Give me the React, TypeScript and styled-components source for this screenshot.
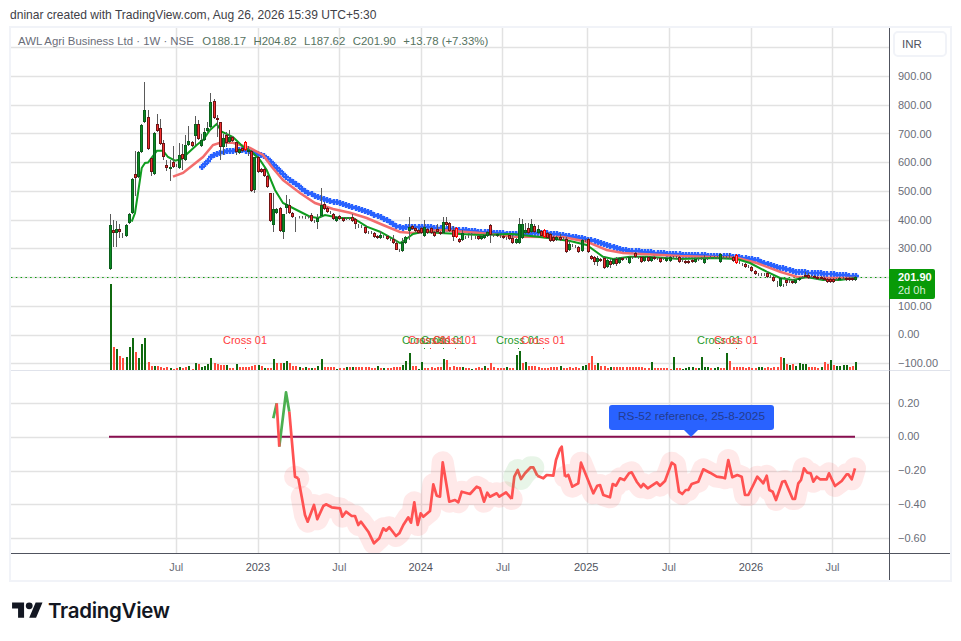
import React from 'react';
import styled, { createGlobalStyle } from 'styled-components';

const FONT = '"Liberation Sans", "Noto Sans", sans-serif';

type Point = [number, number];
type Candle = [string, number, number, number?, number?];

const BAR_START = 110.3;
const BAR_STEP = 3.145;
const barX = (i: number) => BAR_START + i * BAR_STEP;

// readings were taken off 3x crops, this brings them back to page pixels
const fromCrop = (ox: number, oy: number, pts: Point[]): Point[] =>
  pts.map(([x, y]) => [ox + x / 3, oy + y / 3] as Point);

const candles: Candle[] = [
  ['g', 225, 269, 214], ['r', 230, 233, 220, 247], ['g', 229, 233, 221, 247], ['r', 229, 232, 224, 238], ['r', 235, 236, 233, 238],
  ['g', 225, 236], ['g', 214, 223], ['g', 179, 213], ['r', 174, 178, 151, 196], ['g', 152, 177],
  ['g', 125, 152], ['g', 110, 122, 82], ['r', 117, 149, 110], ['r', 158, 172, 158, 176], ['g', 133, 174],
  ['r', 124, 131, 114], ['r', 128, 144, 119], ['r', 143, 157, 140, 160], ['r', 165, 168, 160, 171], ['g', 167, 169, 160, 181],
  ['r', 162, 167, 146], ['r', 165, 166], ['g', 155, 168, 143], ['r', 154, 159, 144, 170], ['g', 145, 160, 135],
  ['g', 141, 145, 126], ['r', 142, 146], ['g', 124, 136, 116, 145], ['r', 124, 139, 120], ['g', 140, 146, 134],
  ['g', 132, 140, 128], ['g', 128, 131, 122], ['g', 102, 127, 93], ['r', 101, 118, 99], ['r', 118, 120, 115, 137],
  ['r', 122, 147, 122, 160], ['g', 138, 147, 134, 155], ['r', 135, 143, 132, 147], ['g', 137, 142, 130], ['r', 137, 141],
  ['r', 142, 152, 142, 155], ['g', 149, 153], ['r', 148, 151], ['x', 142, 150], ['g', 150, 152, 146, 156],
  ['r', 151, 191], ['g', 157, 190, 157, 193], ['r', 157, 172], ['r', 169, 172], ['r', 169, 176],
  ['r', 176, 187], ['r', 193, 221, 193], ['g', 209, 225, 193, 232], ['g', 209, 213], ['r', 208, 231],
  ['g', 214, 232, 214, 239], ['g', 204, 208, 195, 214], ['r', 205, 213, 199], ['r', 213, 217], ['r', 217, 217.5, 217, 232],
  ['r', 217, 217.5], ['r', 217, 217.5], ['r', 217, 218], ['r', 217, 217.5], ['r', 215, 221, 213, 222],
  ['r', 221, 222], ['g', 218, 222, 214, 229], ['g', 205, 216, 188], ['r', 204, 209, 202], ['r', 208, 212],
  ['r', 212, 213], ['r', 214, 219], ['g', 217, 221], ['r', 216, 219], ['r', 218, 221],
  ['r', 218, 219], ['r', 218, 219], ['r', 217, 221, 214], ['r', 219, 224, 218, 229], ['r', 224, 225, 224, 228],
  ['r', 226, 227], ['r', 227, 233], ['r', 232, 233], ['r', 232, 233], ['r', 233, 237],
  ['r', 236, 238], ['g', 235, 238, 231], ['r', 236, 237], ['r', 236, 239], ['r', 239, 240],
  ['r', 239, 243, 235], ['r', 243, 250, 240, 250], ['r', 250, 251], ['g', 242, 251, 238, 252], ['g', 237, 243],
  ['g', 227, 231, 217, 240], ['r', 226, 229], ['r', 228, 231], ['r', 230, 233], ['r', 228, 233],
  ['g', 227, 236, 220], ['r', 229, 233], ['r', 228, 233], ['r', 232, 236], ['r', 229, 232, 224],
  ['r', 232, 234], ['g', 222, 233, 217], ['r', 222, 225, 217], ['r', 223, 231], ['r', 230, 237, 226, 241],
  ['x', 228, 237], ['r', 239, 242], ['g', 233, 240, 230], ['r', 237, 238], ['r', 236, 237],
  ['r', 236, 237, 233, 240], ['r', 237, 238], ['r', 236, 239], ['g', 236, 239], ['g', 235, 238],
  ['g', 232, 236], ['r', 225, 235, 224, 243], ['r', 235, 236], ['g', 234, 236], ['r', 236, 237],
  ['r', 236, 238], ['r', 238, 239], ['r', 235, 239], ['r', 238, 243, 235, 244], ['g', 239, 243],
  ['g', 224, 243, 218], ['g', 224, 238, 219], ['g', 230, 233, 223], ['r', 228, 233, 223], ['g', 224, 232, 219],
  ['r', 226, 232, 224], ['g', 229, 233, 225], ['r', 231, 236], ['x', 230, 237], ['r', 233, 238],
  ['r', 234, 241], ['r', 237, 241], ['g', 237, 240], ['r', 237, 240, 234], ['r', 238, 239],
  ['r', 239, 252, 237, 253], ['g', 244, 250, 241], ['r', 245, 246], ['r', 246, 247], ['r', 247, 252],
  ['g', 240, 251], ['r', 240, 241], ['r', 239, 252], ['r', 256, 259], ['r', 257, 262, 256, 265],
  ['g', 258, 262, 256, 266], ['r', 259, 261], ['r', 258, 268], ['g', 260, 267], ['r', 261, 265, 259, 268],
  ['g', 259, 264], ['r', 259, 264, 257, 266], ['g', 258, 263], ['r', 258, 260], ['g', 258, 259],
  ['g', 257, 263], ['r', 257, 258], ['r', 253, 257, 252, 258], ['r', 257, 258], ['r', 257, 262],
  ['g', 257, 261], ['r', 257, 261], ['g', 257, 261], ['r', 257, 259], ['r', 258, 259],
  ['r', 258, 262], ['r', 258, 259], ['g', 258, 261], ['g', 257, 261], ['r', 257, 258],
  ['r', 257, 258], ['r', 257, 262], ['r', 260, 261], ['r', 261, 263], ['r', 261, 263],
  ['r', 260, 262], ['g', 259, 262], ['r', 259, 260], ['r', 258, 259], ['g', 259, 263, 255],
  ['r', 258, 259], ['r', 257, 258], ['r', 257, 258], ['r', 257, 258], ['g', 254, 262],
  ['r', 257, 258], ['r', 257, 258], ['r', 257, 258, 253], ['r', 257, 261], ['x', 255, 263, 254],
  ['r', 262, 263], ['r', 264, 265], ['r', 264, 267], ['r', 266, 267], ['r', 267, 271],
  ['r', 271, 274], ['r', 274, 275], ['r', 274, 275], ['r', 274, 275], ['r', 273, 277, 271],
  ['r', 276, 277], ['r', 277, 281], ['r', 284, 285, 281, 287], ['g', 278, 286], ['r', 285, 286],
  ['r', 280, 283, 278, 286], ['r', 281, 282], ['r', 281, 283, 279, 284], ['g', 280, 283], ['g', 278, 280],
  ['g', 277, 278], ['r', 275, 277, 272], ['r', 275, 278, 273], ['r', 276, 277], ['r', 276, 278],
  ['r', 277, 279], ['r', 277, 279], ['r', 278, 280], ['r', 279, 282], ['r', 279, 282],
  ['r', 279, 282], ['r', 279, 280], ['g', 278, 280], ['r', 278, 279], ['r', 278, 280],
  ['r', 278, 280], ['r', 278, 280], ['g', 277, 280],
];

// positive is an up week, negative a down week, twenty bars to a row
const volumes = [
  86, -23, 21, -14, -12, 13, 23, 32, -18, 12, 26, 32, -8, -4, 4, -4, -3, -2, -3, 2,
  -1, -2, 3, -2, -3, 4, -1, 7, -6, 3, 4, 6, 12, -7, -6, -5, -5, 5, -2, -2,
  6, -3, -3, -3, -3, -4, -5, 5, -4, 2, -2, -2, 11, -7, -7, 7, 9, -7, -4, -4,
  3, -2, 3, -2, 2, -2, 4, 11, -3, -3, -3, -3, 1, -2, -2, 3, -3, 3, -3, -3,
  -3, -3, -3, -2, -2, 4, -2, 2, -2, -2, -3, -3, -3, 5, 9, 17, -4, -4, 1, 8,
  -2, -2, -3, -2, -3, -3, 11, -10, -3, -4, -3, -3, 3, -2, -2, 1, -2, -3, -2, 4,
  -2, -7, -3, -2, -2, -2, 3, -2, -2, 15, 19, -7, 8, -4, -4, -4, -3, -2, -2, -2,
  -3, -3, -3, 4, -2, -2, -3, -2, -3, -2, 4, 5, -7, -14, -5, 7, -4, -4, -2, 3,
  -3, -3, -3, -3, -3, -3, -3, -3, -3, -3, -2, -2, 8, -2, -2, -2, -2, -2, -1, 13,
  -2, -2, 1, 2, 3, 3, -2, 2, 13, 3, 3, -2, 2, 3, -2, -2, 17, -9, -3, -3,
  -3, -3, -2, -3, -2, -2, 3, 3, -2, -3, -2, -3, -3, -13, 12, -6, 5, -6, 4, 7,
  6, 6, -3, -3, -3, -2, 3, -8, -6, 10, -5, 4, 4, 5, 5, -3, -4, 8,
];

const greenLine: Point[] = [
  [131.7, 221.7], [135, 213], [138, 193], [141.7, 168], [145, 163], [148, 162.5], [157, 150.7], [163, 150.7], [168, 157],
  [175, 160.7], [181.7, 159], [188, 153], [196.7, 145], [203, 140], [210, 130], [216.7, 124], [221.7, 131.7], [233, 137],
  [243, 146.7], [251.7, 151.7], [260, 160], [266.7, 170], [275, 190], [283, 203], [296.7, 210], [310, 216.7], [318, 218],
  [325, 215], [340, 218], [353, 218], [366.7, 226.7], [380, 231.7], [391.7, 238], [400, 243], [405, 240], [413, 234],
  [423, 231.7], [440, 233], [480, 235], [512, 234], [540, 237], [570, 241], [586.7, 245], [603, 256.7], [613, 259],
  [630, 256.7], [646.7, 256.7], [680, 259], [713, 258], [736.7, 259], [750, 263], [766.7, 271.7], [780, 278], [793, 280],
  [806.7, 277], [823, 280], [840, 280], [855, 278],
];

const pinkLine: Point[] = [
  [173, 176.7], [183, 173], [193, 165], [203, 157], [213, 145], [220, 142.7], [233, 142.7], [250, 148], [263, 155],
  [271.7, 166.7], [283, 180], [300, 193], [315, 203], [333, 209], [350, 212.7], [366.7, 218], [383, 225], [400, 232],
  [413, 233], [440, 230], [480, 233], [513, 236.7], [563, 237], [586.7, 241.7], [606.7, 250], [623, 253], [680, 256],
  [736.7, 257.7], [756.7, 263], [780, 271.7], [796.7, 276.7], [826.7, 278], [855, 278],
];

const blueLine: Point[] = [
  [200, 168], [206.7, 161.7], [213, 155], [226.7, 151], [240, 150], [253, 151.7], [265, 156.7], [276.7, 168], [290, 180],
  [306.7, 191.7], [320, 198], [350, 206], [366.7, 211.7], [383, 218], [400, 227.7], [423, 226.7], [480, 231.7], [513, 234],
  [546.7, 233], [570, 236], [590, 240], [613, 247], [623, 250], [670, 254], [736.7, 256.7], [756.7, 260], [780, 267.7],
  [796.7, 271.7], [855, 276],
];

const rsGreenStart: Point[] = fromCrop(260, 380, [[40, 115], [50, 70]]);
const rsRedDip: Point[] = fromCrop(260, 380, [[50, 70], [58, 200]]);
const rsGreenPeak: Point[] = fromCrop(260, 380, [[58, 200], [78, 37], [88, 95]]);
const rsDrop: Point[] = fromCrop(260, 380, [[88, 95], [105, 290], [115, 295]]);
const rsBase: Point[] = fromCrop(260, 380, [
  [115, 295], [125, 350], [135, 405], [143, 425], [162, 375], [172, 418], [190, 378], [198, 373], [215, 382], [240, 385],
  [247, 410], [258, 395], [275, 408], [285, 408], [295, 435], [303, 425], [325, 455], [342, 490], [358, 475], [370, 445],
  [378, 452], [388, 442], [408, 468], [418, 460], [430, 435], [445, 412], [453, 428], [463, 367], [473, 435], [482, 400],
  [490, 410], [510, 393], [520, 313], [530, 347], [540, 350], [548, 247], [568, 365], [585, 360], [595, 367], [605, 335],
  [630, 342], [650, 320], [660, 325], [672, 365], [682, 338], [690, 350], [710, 340], [718, 350], [738, 337], [755, 357],
]);
const rsGreenZone: Point[] = fromCrop(260, 380, [
  [755, 357], [763, 290], [773, 270], [783, 297], [795, 280], [812, 262], [820, 262], [832, 287],
]);
const rsPeak: Point[] = [
  [537.3, 475.7], [543.3, 478.3], [546.7, 475], [553.3, 475.7], [556, 460], [560, 449], [561.7, 446.7], [565, 476.7],
];
const rsTail: Point[] = fromCrop(480, 320, [
  [255, 470], [265, 465], [277, 500], [295, 490], [303, 428], [320, 470], [340, 520], [352, 497], [360, 495], [370, 525],
  [390, 532], [398, 492], [408, 497], [420, 475], [433, 480], [447, 460], [455, 457], [470, 485], [483, 502], [490, 492],
  [503, 505], [530, 487], [540, 497], [555, 483], [575, 428], [585, 435], [597, 515], [607, 522], [617, 510], [625, 510],
  [635, 492], [655, 485], [670, 448], [690, 458], [710, 470], [725, 472], [735, 475], [745, 420], [757, 472], [772, 465],
  [785, 470], [795, 525], [805, 525], [820, 495], [832, 470], [850, 490], [860, 467], [868, 510], [878, 515], [888, 540],
  [907, 485], [915, 483], [938, 537], [945, 537], [955, 490], [963, 480], [972, 445], [982, 458], [992, 460], [1000, 485],
  [1010, 470], [1020, 478], [1040, 478], [1047, 460], [1065, 498], [1085, 483], [1100, 463], [1105, 463], [1115, 478], [1125, 445],
]);

const toPoints = (pts: Point[]) => pts.map(([x, y]) => `${x.toFixed(1)},${y.toFixed(1)}`).join(' ');

const lineYAt = (pts: Point[], x: number) => {
  for (let i = 1; i < pts.length; i++) {
    if (x <= pts[i][0]) {
      const [x0, y0] = pts[i - 1];
      const [x1, y1] = pts[i];
      return y0 + ((y1 - y0) * (x - x0)) / (x1 - x0);
    }
  }
  return pts[pts.length - 1][1];
};

const blueCrosses = candles
  .map((_, i) => barX(i))
  .filter((x) => x >= 199 && x <= 857)
  .map((x) => {
    const cx = Math.round(x);
    const cy = Math.round(lineYAt(blueLine, x));
    return `M${cx - 3} ${cy}h6M${cx} ${cy - 3}v6`;
  })
  .join('');

const gridX = [176.5, 258.5, 339.5, 421.5, 502.5, 587.5, 669.5, 751.5, 832.5];
const mainGridY = [47.5, 76.5, 105.5, 133.5, 162.5, 191.5, 220.5, 248.5, 277.5, 306.5, 335.5, 363.5];
const lowerGridY = [403.5, 437.5, 471.5, 504.5, 538.5];

const crossMarks = [
  { x: 245, color: '#ff3b3b' },
  { x: 424, color: '#1f9a2a' },
  { x: 430, color: '#ff3b3b' },
  { x: 443, color: '#1f9a2a' },
  { x: 455, color: '#ff3b3b' },
  { x: 518, color: '#1f9a2a' },
  { x: 543, color: '#ff3b3b' },
  { x: 719, color: '#1f9a2a' },
  { x: 736, color: '#ff3b3b' },
];

const mainTicks = ['900.00', '800.00', '700.00', '600.00', '500.00', '400.00', '300.00', '', '100.00', '0.00', '\u2212100.00'];
const lowerTicks = ['0.20', '0.00', '\u22120.20', '\u22120.40', '\u22120.60'];
const timeTicks = [
  { label: 'Jul', width: 81.5 },
  { label: '2023', width: 81.75, year: true },
  { label: 'Jul', width: 81.25 },
  { label: '2024', width: 81.5, year: true },
  { label: 'Jul', width: 83 },
  { label: '2025', width: 83.5, year: true },
  { label: 'Jul', width: 82 },
  { label: '2026', width: 82, year: true },
  { label: 'Jul', width: 81 },
];

const GlobalStyle = createGlobalStyle`
  html, body {
    margin: 0;
    background: #ffffff;
  }
`;

const Page = styled.div`
  width: 961px;
  height: 641px;
  padding: 0 9px;
  box-sizing: border-box;
  font-family: ${FONT};
  overflow: hidden;
`;

const Caption = styled.div`
  height: 26px;
  padding: 6px 0 0 1px;
  box-sizing: border-box;
  font-size: 12.05px;
  line-height: 18px;
  color: #3f4147;
`;

const ChartFrame = styled.div`
  width: 943px;
  height: 556px;
  box-sizing: border-box;
  border: 2px solid #f1f3f8;
  display: grid;
  grid-template-columns: 879px 60px;
  grid-template-rows: 343px 183px 26px;
`;

const Plot = styled.div<{ $strong?: boolean }>`
  position: relative;
  box-sizing: border-box;
  border-right: 1px solid #50535e;
  border-bottom: 1px solid ${({ $strong }) => ($strong ? '#50535e' : '#e0e3eb')};

  svg {
    display: block;
  }
`;

const Legend = styled.div`
  position: absolute;
  top: 4px;
  left: 7px;
  display: flex;
  gap: 7.5px;
  font-size: 11.4px;
  line-height: 18px;
  color: #6a6d78;
  white-space: nowrap;
`;

const LegendTitle = styled.span`
  margin-right: 1px;
`;

const LegendValue = styled.span`
  color: #56735f;
`;

const PriceAxis = styled.div<{ $top: number; $strong?: boolean }>`
  position: relative;
  box-sizing: border-box;
  padding-top: ${({ $top }) => $top}px;
  border-bottom: 1px solid ${({ $strong }) => ($strong ? '#50535e' : '#e0e3eb')};
`;

const PriceTick = styled.div<{ $height: number }>`
  height: ${({ $height }) => $height}px;
  line-height: ${({ $height }) => $height}px;
  padding-left: 8px;
  font-size: 11px;
  color: #6a6d78;
  white-space: nowrap;
`;

const CurrencyButton = styled.div`
  position: absolute;
  top: 3px;
  left: 3px;
  width: 54px;
  height: 26px;
  box-sizing: border-box;
  border: 2px solid #f1f3f8;
  border-radius: 5px;
  padding-left: 7px;
  font-size: 11.5px;
  line-height: 22px;
  color: #50535e;
`;

const LastPriceTag = styled.div`
  position: absolute;
  top: 241px;
  left: -1px;
  width: 46px;
  height: 30px;
  box-sizing: border-box;
  padding: 2px 0 0 9px;
  background: #089a08;
  border-radius: 0 2px 2px 0;
  color: #ffffff;
  font-size: 11px;
  line-height: 13px;
`;

const TagPrice = styled.div`
  font-weight: 700;
`;

const TagCountdown = styled.div`
  color: #d5f0d5;
`;

const NoteBubble = styled.div`
  position: absolute;
  top: 34px;
  left: 598px;
  width: 165px;
  height: 25px;
  box-sizing: border-box;
  border-radius: 3px;
  background: #2962ff;
  color: #243c8f;
  font-size: 11.8px;
  line-height: 22px;
  text-align: center;
  white-space: nowrap;

  &::after {
    content: '';
    position: absolute;
    left: 75px;
    bottom: -7px;
    border-left: 7px solid transparent;
    border-right: 7px solid transparent;
    border-top: 7px solid #2962ff;
  }
`;

const TimeAxis = styled.div`
  display: flex;
  padding-left: 124.5px;
  border-right: 1px solid #50535e;
  font-size: 11px;
  line-height: 26px;
`;

const TimeTick = styled.div<{ $width: number; $year?: boolean }>`
  flex: 0 0 ${({ $width }) => $width}px;
  text-align: center;
  color: ${({ $year }) => ($year ? '#50535e' : '#6a6d78')};
`;

const AxisCorner = styled.div``;

const Footer = styled.div`
  display: flex;
  align-items: center;
  gap: 5px;
  margin-top: 16px;
  padding-left: 3px;
`;

const Wordmark = styled.div`
  font-family: Inter, "Liberation Sans", sans-serif;
  font-size: 20.5px;
  font-weight: 600;
  line-height: 26px;
  letter-spacing: -0.3px;
  color: #131722;
`;

const CrossLabel = styled.text<{ $color: string }>`
  font-family: ${FONT};
  font-size: 11px;
  fill: ${({ $color }) => $color};
  text-anchor: middle;
`;

const GridLines = ({ ys, y0, y1 }: { ys: number[]; y0: number; y1: number }) => (
  <g stroke="#e2e2e2" strokeWidth={1.5}>
    {ys.map((y) => (
      <line key={y} x1={11} x2={889} y1={y} y2={y} />
    ))}
    {gridX.map((x) => (
      <line key={x} x1={x} x2={x} y1={y0} y2={y1} />
    ))}
  </g>
);

const candleColors: Record<string, { fill: string; stroke: string }> = {
  g: { fill: '#0b8a22', stroke: '#0a5f1c' },
  r: { fill: '#f23030', stroke: '#6f1414' },
  x: { fill: '#ff8a8a', stroke: '#ff0000' },
};

const Candles = () => (
  <g>
    {candles.map(([kind, top, bottom, wickTop, wickBottom], i) => {
      const c = Math.floor(barX(i));
      const y = Math.round(top) + 0.5;
      const h = Math.max(Math.round(bottom - top) - 1, 0);
      return (
        <g key={i}>
          <line
            x1={c + 0.5}
            x2={c + 0.5}
            y1={wickTop ?? top - 1}
            y2={wickBottom ?? bottom + 1}
            stroke={kind === 'x' ? '#ff0000' : '#5a5a5a'}
          />
          <rect
            x={c - 0.5}
            y={y}
            width={2}
            height={h}
            fill={candleColors[kind].fill}
            stroke={candleColors[kind].stroke}
          />
        </g>
      );
    })}
  </g>
);

const VolumeBars = () => (
  <g>
    {volumes.map((v, i) => (
      <rect
        key={i}
        x={Math.floor(barX(i))}
        y={370 - Math.abs(v)}
        width={2}
        height={Math.abs(v)}
        fill={v > 0 ? '#10690f' : '#ff4b3e'}
      />
    ))}
  </g>
);

const MainChart = () => (
  <svg width={878} height={342} viewBox="11 28 878 342">
    <GridLines ys={mainGridY} y0={28} y1={370} />
    <line x1={11} x2={889} y1={277.5} y2={277.5} stroke="#089a08" strokeDasharray="1.5 3.3" />
    <VolumeBars />
    <path d={blueCrosses} fill="none" stroke="#2962ff" strokeWidth={2.4} />
    <polyline points={toPoints(pinkLine)} fill="none" stroke="#f26d6d" strokeWidth={2.5} />
    <polyline points={toPoints(greenLine)} fill="none" stroke="#0f9d1f" strokeWidth={2} />
    <Candles />
    {crossMarks.map((m) => (
      <g key={m.x}>
        <CrossLabel x={m.x} y={344} $color={m.color}>Cross 01</CrossLabel>
        <rect x={Math.round(m.x)} y={348} width={1} height={1} fill={m.color} />
      </g>
    ))}
  </svg>
);

const RsLine = ({ pts, color }: { pts: Point[]; color: string }) => (
  <polyline points={toPoints(pts)} fill="none" stroke={color} strokeWidth={2.7} strokeLinejoin="round" />
);

const Halo = ({ pts, color }: { pts: Point[]; color: string }) => (
  <polyline
    points={toPoints(pts)}
    fill="none"
    stroke={color}
    strokeWidth={22}
    strokeLinecap="round"
    strokeLinejoin="round"
    opacity={0.13}
  />
);

const LowerChart = () => (
  <svg width={878} height={182} viewBox="11 371 878 182">
    <GridLines ys={lowerGridY} y0={371} y1={553} />
    <line x1={109} x2={855} y1={436.7} y2={436.7} stroke="#880e4f" strokeWidth={2} />
    <Halo pts={rsDrop.slice(1)} color="#ff5252" />
    <Halo pts={rsBase.slice(1)} color="#ff5252" />
    <Halo pts={rsTail} color="#ff5252" />
    <RsLine pts={rsGreenStart} color="#4caf50" />
    <RsLine pts={rsGreenPeak} color="#4caf50" />
    <RsLine pts={rsRedDip} color="#ff5252" />
    <RsLine pts={rsDrop} color="#ff5252" />
    <RsLine pts={rsBase} color="#ff5252" />
    <RsLine pts={rsGreenZone} color="#ff5252" />
    <RsLine pts={rsPeak} color="#ff5252" />
    <RsLine pts={rsTail} color="#ff5252" />
    <Halo pts={rsGreenZone.slice(1, -1)} color="#4caf50" />
  </svg>
);

const TradingViewLogo = () => (
  <svg width={31} height={24} viewBox="0 0 36 28" fill="#131722">
    <path d="M14 22H7V11H0V4h14v18zM28 22h-8l7.5-18h8L28 22z" />
    <circle cx={20} cy={8} r={4} />
  </svg>
);

const App = () => (
  <Page>
    <GlobalStyle />
    <Caption>dninar created with TradingView.com, Aug 26, 2026 15:39 UTC+5:30</Caption>
    <ChartFrame>
      <Plot>
        <MainChart />
        <Legend>
          <LegendTitle>AWL Agri Business Ltd · 1W · NSE</LegendTitle>
          <LegendValue>O188.17</LegendValue>
          <LegendValue>H204.82</LegendValue>
          <LegendValue>L187.62</LegendValue>
          <LegendValue>C201.90</LegendValue>
          <LegendValue>+13.78 (+7.33%)</LegendValue>
        </Legend>
      </Plot>
      <PriceAxis $top={34.2}>
        <CurrencyButton>INR</CurrencyButton>
        {mainTicks.map((t, i) => (
          <PriceTick key={i} $height={28.7}>{t}</PriceTick>
        ))}
        <LastPriceTag>
          <TagPrice>201.90</TagPrice>
          <TagCountdown>2d 0h</TagCountdown>
        </LastPriceTag>
      </PriceAxis>
      <Plot $strong>
        <LowerChart />
        <NoteBubble>RS-52 reference, 25-8-2025</NoteBubble>
      </Plot>
      <PriceAxis $top={15.5} $strong>
        {lowerTicks.map((t) => (
          <PriceTick key={t} $height={33.75}>{t}</PriceTick>
        ))}
      </PriceAxis>
      <TimeAxis>
        {timeTicks.map((t, i) => (
          <TimeTick key={i} $width={t.width} $year={t.year}>{t.label}</TimeTick>
        ))}
      </TimeAxis>
      <AxisCorner />
    </ChartFrame>
    <Footer>
      <TradingViewLogo />
      <Wordmark>TradingView</Wordmark>
    </Footer>
  </Page>
);

export default App;
